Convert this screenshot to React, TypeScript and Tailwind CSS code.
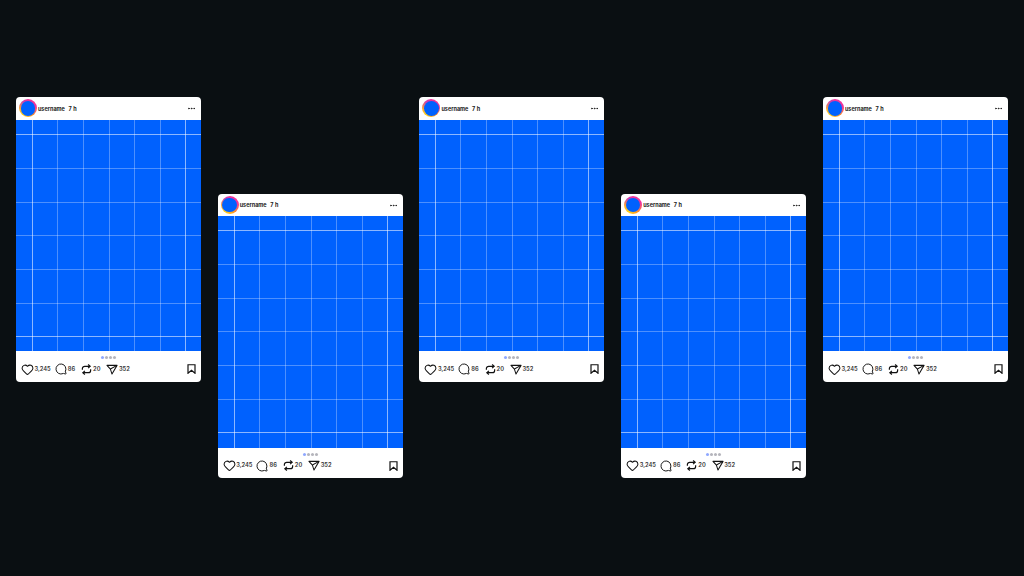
import { Heart, MessageCircle, MoreHorizontal } from "lucide-react";

const verticals = [16, 41, 67, 93, 118, 144, 169];
const horizontals = [14, 48, 82, 115, 149, 183, 216];

const RepostIcon = () => (
  <svg width="11" height="11" viewBox="0 0 24 24" fill="none" stroke="#111" strokeWidth="2.6" className="ml-[6px] shrink-0">
    <path d="M3 12.500V10a5 5 0 0 1 5-5h11" />
    <path d="M15.500 1 20 5l-4.500 4" />
    <path d="M21 11.500V14a5 5 0 0 1-5 5H5" />
    <path d="M8.500 15 4 19l4.500 4" />
  </svg>
);

const ShareIcon = () => (
  <svg width="12" height="11" viewBox="0 0 26 24" fill="none" stroke="#111" strokeWidth="2.2" strokeLinejoin="round" className="ml-[6px] shrink-0">
    <path d="M2 3h22L13 22 9.500 11z" />
    <path d="M9.500 11 24 3" />
  </svg>
);

const SaveIcon = () => (
  <svg width="9" height="10" viewBox="0 0 18 20" fill="none" stroke="#111" strokeWidth="2.4" className="ml-auto shrink-0">
    <path d="M2 1.500h14v17l-7-6-7 6z" />
  </svg>
);

const Post = ({ lowered }: { lowered: boolean }) => {
  return (
    <div
      className={`w-[185px] h-[284.500px] bg-white rounded-[4px] overflow-hidden flex flex-col shrink-0 ${
        lowered ? "mt-[193.600px]" : "mt-[97px]"
      }`}
    >
      {/* Header */}
      <div className="h-[22.700px] shrink-0 flex items-center pl-[3px] pr-[5px]">
        <div className="w-[18px] h-[18px] rounded-full bg-[conic-gradient(from_0deg,#f0339a,#f0339a_22%,#ff9a1f_42%,#ffd21f_60%,#ffb02a_72%,#c83fb0_90%,#f0339a)] flex items-center justify-center">
          <div className="w-[14.500px] h-[14.500px] rounded-full bg-[#0061fe]" />
        </div>
        <span className="ml-[1px] mt-[1px] text-[5.500px] font-bold text-[#222]">username</span>
        <span className="ml-[3.500px] mt-[1px] text-[5.500px] font-bold tracking-[0.2px] text-[#222]">7 h</span>
        <MoreHorizontal className="ml-auto mt-[1px] text-[#222]" size={9} strokeWidth={2.5} />
      </div>

      {/* Image grid */}
      <svg className="block w-[185px] h-[231.500px] shrink-0 bg-[#0061fe]" viewBox="0 0 185 231.500">
        {verticals.map((x, i) => (
          <line
            key={x}
            x1={x + 0.5}
            x2={x + 0.5}
            y1={0}
            y2={232}
            stroke="#fff"
            strokeOpacity={i === 0 || i === 6 ? 0.55 : 0.3}
          />
        ))}
        {horizontals.map((y, i) => (
          <line
            key={y}
            x1={0}
            x2={185}
            y1={y + 0.5}
            y2={y + 0.5}
            stroke="#fff"
            strokeOpacity={i === 0 || i === 6 ? 0.55 : 0.3}
          />
        ))}
      </svg>

      {/* Footer */}
      <div className="flex-1 flex flex-col items-center pt-[5px] px-[5px]">
        <div className="flex gap-[1px]">
          <span className="w-[3px] h-[3px] rounded-full bg-[#8fa8ff]" />
          <span className="w-[3px] h-[3px] rounded-full bg-[#b5b5bc]" />
          <span className="w-[3px] h-[3px] rounded-full bg-[#b5b5bc]" />
          <span className="w-[3px] h-[3px] rounded-full bg-[#b5b5bc]" />
        </div>
        <div className="w-full mt-[3.500px] flex items-center text-[5.750px] font-semibold text-[#333]">
          <Heart size={13} strokeWidth={1.9} className="text-[#111] shrink-0" />
          <span className="ml-[0.500px]">3,245</span>
          <MessageCircle size={12} strokeWidth={1.9} className="ml-[4px] text-[#111] -scale-x-100 shrink-0" />
          <span className="ml-[1px]">86</span>
          <RepostIcon />
          <span className="ml-[1px]">20</span>
          <ShareIcon />
          <span className="ml-[0.500px]">352</span>
          <SaveIcon />
        </div>
      </div>
    </div>
  );
};

export default function App() {
  return (
    <div className="w-[1024px] h-[576px] bg-[#0a0f12] overflow-hidden flex items-start pl-[15.900px] gap-[16.750px] [font-family:'Inter','Liberation_Sans',sans-serif]">
      {[false, true, false, true, false].map((lowered, i) => (
        <Post key={i} lowered={lowered} />
      ))}
    </div>
  );
}
